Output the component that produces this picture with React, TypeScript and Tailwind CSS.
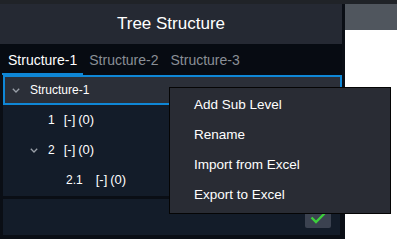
import React from "react";

const Chevron = ({ className = "" }: { className?: string }) => (
  <svg width="8" height="5" viewBox="0 0 8 5" className={className}>
    <path d="M0.8 0.8 L4 4 L7.2 0.8" fill="none" stroke="#9aa0a8" strokeWidth="1.3" />
  </svg>
);

const Row = ({
  indent,
  chevron,
  label,
  gap,
}: {
  indent: number;
  chevron?: boolean;
  label: string;
  gap: string;
}) => (
  <div className="h-[30px] flex items-center text-[12px] text-white" style={{ paddingLeft: indent }}>
    <div className="w-[18px] flex items-center">{chevron && <Chevron />}</div>
    <span>{label}</span>
    <span className={`${gap} text-[13px]`}>[-]</span>
    <span className="ml-[3px] text-[13px]">(0)</span>
  </div>
);

export default function App() {
  return (
    <div
      className="w-[397px] h-[239px] bg-white flex flex-col relative overflow-hidden"
      style={{ fontFamily: '"Liberation Sans", Arial, sans-serif' }}
    >
      <div className="h-[4px] bg-[#202328] shrink-0" />
      <div className="flex flex-1">
        <div className="w-[345px] h-[235px] bg-[#0a0e15] flex flex-col pr-[3px]">
          <div className="h-[40px] bg-[#252933] flex items-center justify-center text-white text-[17px] shrink-0 pb-[1px]">
            Tree Structure
          </div>
          <div className="h-[31px] bg-[#070b12] flex items-end pl-[2px] gap-[12px] text-[14px] leading-[20px] shrink-0">
            <div className="px-[6px] pb-[3px] text-white border-b-2 border-[#0f87d6]">Structure-1</div>
            <div className="pb-[5px] text-[#8a8f96] -ml-[6px]">Structure-2</div>
            <div className="pb-[5px] text-[#8a8f96]">Structure-3</div>
          </div>
          <div className="h-[121px] bg-[#131c29] ml-[3px] flex flex-col shrink-0">
            <div className="h-[30px] bg-[#2b2f38] border-2 border-[#0f87d6] flex items-center text-[12px] text-white">
              <div className="w-[25px] pl-[7px] flex items-center">
                <Chevron />
              </div>
              <span>Structure-1</span>
            </div>
            <Row indent={27} label="1" gap="ml-[9px]" />
            <Row indent={27} chevron label="2" gap="ml-[9px]" />
            <Row indent={45} label="2.1" gap="ml-[13px]" />
          </div>
          <div className="h-[3px] shrink-0" />
          <div className="h-[36px] bg-[#131c29] ml-[3px] mr-[2px] flex items-center justify-end pr-[9px] shrink-0">
            <div className="w-[26px] h-[21px] bg-[#3b4250] rounded-[2px] flex items-center justify-center mt-[1px]">
              <svg width="16" height="12" viewBox="0 0 16 12">
                <path d="M1.5 5.5 L6 10 L14.5 1.5" fill="none" stroke="#3ccf3c" strokeWidth="2.4" />
              </svg>
            </div>
          </div>
        </div>
        <div className="flex-1 flex flex-col">
          <div className="h-[26px] bg-[#50565e]" />
          <div className="flex-1 bg-white" />
        </div>
      </div>

      <div className="absolute left-[169px] top-[87px] w-[222px] h-[127px] bg-[#292c34] border border-[#050505] pt-[2px] text-white text-[13.5px]">
        {["Add Sub Level", "Rename", "Import from Excel", "Export to Excel"].map((t) => (
          <div key={t} className="h-[30px] flex items-center pl-[24px]">
            {t}
          </div>
        ))}
      </div>
    </div>
  );
}
